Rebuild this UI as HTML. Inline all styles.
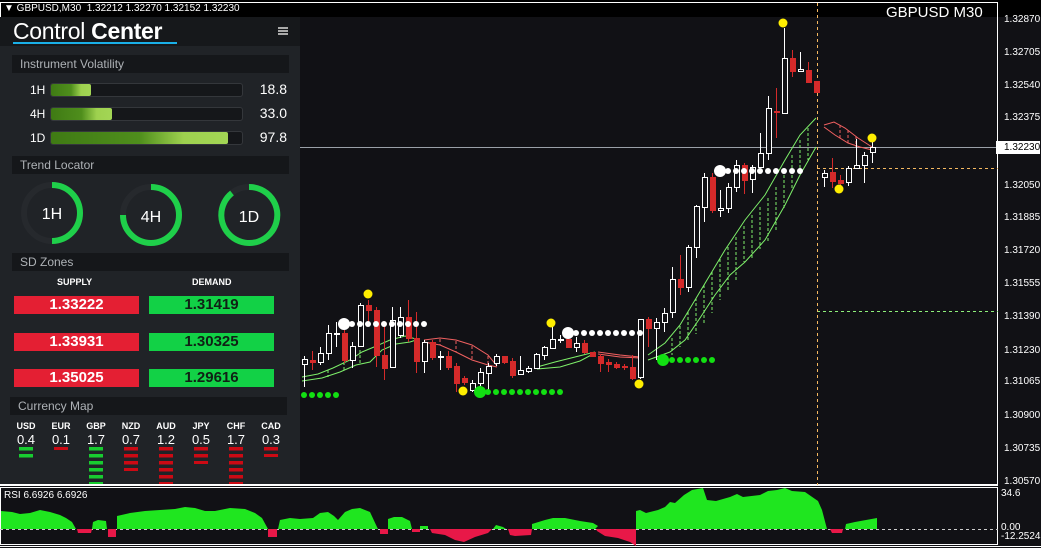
<!DOCTYPE html>
<html><head><meta charset="utf-8">
<style>
*{margin:0;padding:0;box-sizing:border-box}
body{width:1041px;height:548px;background:#111115;position:relative;overflow:hidden;font-family:"Liberation Sans",sans-serif;color:#fff}
.abs{position:absolute}
#panel{left:0;top:17px;width:300px;height:467px;background:#202327}
.hdr{position:absolute;left:12px;width:277px;height:18px;background:#15171a;color:#aeb2b6;font-size:12px;line-height:18px;padding-left:8px}
.bar{position:absolute;left:50px;width:193px;height:14px;background:#15171a;border:1px solid #34373b;border-radius:3px}
.fill{height:12px;border-radius:2px;background:linear-gradient(90deg,#3f7a14,#4f8e1c 50%,#9ed14f 75%,#a3d655)}
.lbl{position:absolute;font-size:12px}
.val{position:absolute;font-size:14px;right:13px;text-align:right}
.sd{position:absolute;width:125px;height:18px;font-size:15px;font-weight:bold;text-align:center;line-height:18px}
.red{background:#e41f33;color:#fff}.grn{background:#12d146;color:#102015}
.cm{position:absolute;text-align:center;width:30px}
.cm b{display:block;font-size:9px;font-weight:bold}
.cm i{display:block;font-style:normal;font-size:13px;margin-top:1px}
.ax{position:absolute;left:1004px;font-size:10px;color:#fff}
</style></head><body>
<div class="abs" style="left:0;top:0;width:1041px;height:17px;background:#000"></div>
<div class="abs" style="left:4px;top:3px;font-size:10px;">&#9660; GBPUSD,M30&nbsp; 1.32212 1.32270 1.32152 1.32230</div>
<div class="abs" style="left:886px;top:4px;font-size:15px;color:#fff">GBPUSD M30</div>

<svg class="abs" style="left:0;top:0" width="1041" height="548">
<rect x="0.5" y="2.5" width="997" height="482" fill="none" stroke="#fff"/>
<rect x="0.5" y="487.5" width="997" height="57" fill="none" stroke="#fff"/>
<line x1="0" y1="485.5" x2="998" y2="485.5" stroke="#fff"/>
<line x1="0" y1="546.5" x2="1041" y2="546.5" stroke="#fff"/>
<line x1="300" y1="147.5" x2="998" y2="147.5" stroke="#9aa0a8"/>
<line x1="817" y1="168.5" x2="998" y2="168.5" stroke="#f5b860" stroke-dasharray="3,3"/>
<line x1="817" y1="311.5" x2="998" y2="311.5" stroke="#8ef07a" stroke-dasharray="3,3"/>
<line x1="817.5" y1="3" x2="817.5" y2="485" stroke="#f5b860" stroke-dasharray="3,3"/>
<line x1="0" y1="529.5" x2="998" y2="529.5" stroke="#ccc" stroke-dasharray="3,3"/>
<g fill="none" stroke="#7ef06a" stroke-width="1">
<polyline points="302,377 318,374 333,368 350,360 362,352 374,347 390,340 405,336 416,339"/>
<polyline points="302,381 322,378 340,372 356,365 370,362 382,350 396,344 410,342 416,340"/>
<polyline points="537,367 555,362 575,357 595,352"/>
<polyline points="537,369 560,367 580,361 595,353"/>
<polyline points="648,355 665,343 680,325 695,300 710,275 725,250 745,220 765,195 785,160 800,135 816,118"/>
<polyline points="648,360 670,352 685,340 700,318 715,295 730,275 745,262 765,240 785,205 800,175 816,147"/>
</g>
<g stroke="#7ef06a" stroke-dasharray="3,2">
<line x1="672" y1="338" x2="672" y2="355"/><line x1="680" y1="326" x2="680" y2="347"/><line x1="688" y1="312" x2="688" y2="342"/><line x1="696" y1="298" x2="696" y2="334"/><line x1="704" y1="285" x2="704" y2="323"/><line x1="712" y1="272" x2="712" y2="313"/><line x1="720" y1="259" x2="720" y2="300"/><line x1="728" y1="247" x2="728" y2="290"/><line x1="736" y1="237" x2="736" y2="280"/><line x1="744" y1="226" x2="744" y2="262"/><line x1="752" y1="215" x2="752" y2="260"/><line x1="760" y1="207" x2="760" y2="249"/><line x1="768" y1="198" x2="768" y2="242"/><line x1="776" y1="187" x2="776" y2="230"/><line x1="784" y1="170" x2="784" y2="210"/><line x1="792" y1="155" x2="792" y2="190"/><line x1="800" y1="140" x2="800" y2="175"/><line x1="808" y1="128" x2="808" y2="160"/>
<line x1="328" y1="370" x2="328" y2="377"/><line x1="344" y1="362" x2="344" y2="370"/><line x1="360" y1="350" x2="360" y2="363"/><line x1="376" y1="345" x2="376" y2="357"/><line x1="392" y1="340" x2="392" y2="345"/>
</g>
<g fill="none" stroke="#f06060">
<polyline points="424,340 440,338 456,340 472,345 488,355 497,366"/>
<polyline points="424,342 440,345 456,352 472,360 488,365 497,367"/>
<polyline points="598,352 620,355 640,357"/>
<polyline points="598,354 620,357 640,358"/>
<polyline points="824,125 834,122 845,128 858,138 872,147"/>
<polyline points="824,127 835,135 848,143 860,147 872,150"/>
</g>
<g stroke="#f06060" stroke-dasharray="3,2"><line x1="440" y1="339" x2="440" y2="345"/><line x1="456" y1="341" x2="456" y2="352"/><line x1="472" y1="346" x2="472" y2="360"/><line x1="488" y1="356" x2="488" y2="365"/><line x1="840" y1="125" x2="840" y2="139"/><line x1="848" y1="130" x2="848" y2="143"/><line x1="856" y1="136" x2="856" y2="147"/></g>
<g stroke-width="1" shape-rendering="crispEdges">
<g stroke="#fff" fill="#111115">
<line x1="304.5" y1="356" x2="304.5" y2="387"/><rect x="302.5" y="359.5" width="5" height="5"/>
<line x1="320.5" y1="347" x2="320.5" y2="365"/><rect x="318.5" y="353.5" width="5" height="9"/>
<line x1="328.5" y1="325" x2="328.5" y2="360"/><rect x="326.5" y="333.5" width="5" height="20"/>
<line x1="336.5" y1="322" x2="336.5" y2="347"/><rect x="334.5" y="333.5" width="5" height="1"/>
<line x1="352.5" y1="342" x2="352.5" y2="368"/><rect x="350.5" y="346.5" width="5" height="14"/>
<line x1="360.5" y1="303" x2="360.5" y2="347"/><rect x="358.5" y="305.5" width="5" height="41"/>
<line x1="392.5" y1="307" x2="392.5" y2="367"/><rect x="390.5" y="320.5" width="5" height="47"/>
<line x1="400.5" y1="307" x2="400.5" y2="338"/><rect x="398.5" y="317.5" width="5" height="18"/>
<line x1="424.5" y1="340" x2="424.5" y2="373"/><rect x="422.5" y="342.5" width="5" height="19"/>
<line x1="440.5" y1="351" x2="440.5" y2="370"/><rect x="438.5" y="356.5" width="5" height="1"/>
<line x1="472.5" y1="380" x2="472.5" y2="392"/><rect x="470.5" y="383.5" width="5" height="7"/>
<line x1="480.5" y1="368" x2="480.5" y2="387"/><rect x="478.5" y="372.5" width="5" height="11"/>
<line x1="488.5" y1="363" x2="488.5" y2="390"/><rect x="486.5" y="366.5" width="5" height="7"/>
<line x1="496.5" y1="354" x2="496.5" y2="366"/><rect x="494.5" y="356.5" width="5" height="7"/>
<line x1="520.5" y1="356" x2="520.5" y2="375"/><rect x="518.5" y="370.5" width="5" height="4"/>
<line x1="528.5" y1="366" x2="528.5" y2="373"/><rect x="526.5" y="368.5" width="5" height="3"/>
<line x1="536.5" y1="353" x2="536.5" y2="369"/><rect x="534.5" y="354.5" width="5" height="14"/>
<line x1="544.5" y1="346" x2="544.5" y2="360"/><rect x="542.5" y="347.5" width="5" height="8"/>
<line x1="552.5" y1="327" x2="552.5" y2="348"/><rect x="550.5" y="339.5" width="5" height="9"/>
<line x1="560.5" y1="335" x2="560.5" y2="343"/><rect x="558.5" y="339.5" width="5" height="1"/>
<line x1="576.5" y1="337" x2="576.5" y2="352"/><rect x="574.5" y="343.5" width="5" height="4"/>
<line x1="640.5" y1="319" x2="640.5" y2="379"/><rect x="638.5" y="319.5" width="5" height="58"/>
<line x1="656.5" y1="318" x2="656.5" y2="360"/><rect x="654.5" y="322.5" width="5" height="6"/>
<line x1="664.5" y1="308" x2="664.5" y2="332"/><rect x="662.5" y="313.5" width="5" height="9"/>
<line x1="672.5" y1="267" x2="672.5" y2="318"/><rect x="670.5" y="279.5" width="5" height="33"/>
<line x1="688.5" y1="245" x2="688.5" y2="292"/><rect x="686.5" y="247.5" width="5" height="40"/>
<line x1="696.5" y1="205" x2="696.5" y2="258"/><rect x="694.5" y="206.5" width="5" height="41"/>
<line x1="704.5" y1="173" x2="704.5" y2="222"/><rect x="702.5" y="177.5" width="5" height="30"/>
<line x1="720.5" y1="190" x2="720.5" y2="217"/><rect x="718.5" y="208.5" width="5" height="2"/>
<line x1="728.5" y1="183" x2="728.5" y2="213"/><rect x="726.5" y="187.5" width="5" height="21"/>
<line x1="736.5" y1="160" x2="736.5" y2="192"/><rect x="734.5" y="165.5" width="5" height="22"/>
<line x1="752.5" y1="165" x2="752.5" y2="193"/><rect x="750.5" y="167.5" width="5" height="12"/>
<line x1="760.5" y1="133" x2="760.5" y2="167"/><rect x="758.5" y="153.5" width="5" height="14"/>
<line x1="768.5" y1="96" x2="768.5" y2="160"/><rect x="766.5" y="108.5" width="5" height="45"/>
<line x1="784.5" y1="28" x2="784.5" y2="113"/><rect x="782.5" y="58.5" width="5" height="55"/>
<line x1="800.5" y1="52" x2="800.5" y2="72"/><rect x="798.5" y="69.5" width="5" height="2"/>
<line x1="824.5" y1="170" x2="824.5" y2="187"/><rect x="822.5" y="173.5" width="5" height="4"/>
<line x1="848.5" y1="166" x2="848.5" y2="186"/><rect x="846.5" y="168.5" width="5" height="14"/>
<line x1="856.5" y1="139" x2="856.5" y2="168"/><rect x="854.5" y="165.5" width="5" height="3"/>
<line x1="864.5" y1="152" x2="864.5" y2="183"/><rect x="862.5" y="155.5" width="5" height="10"/>
<line x1="872.5" y1="140" x2="872.5" y2="163"/><rect x="870.5" y="147.5" width="5" height="5"/>
</g>
<g stroke="#d42a2a" fill="#d42a2a">
<line x1="312.5" y1="351" x2="312.5" y2="370"/><rect x="310.5" y="360.5" width="5" height="2"/>
<line x1="344.5" y1="330" x2="344.5" y2="363"/><rect x="342.5" y="333.5" width="5" height="27"/>
<line x1="368.5" y1="300" x2="368.5" y2="323"/><rect x="366.5" y="305.5" width="5" height="5"/>
<line x1="376.5" y1="307" x2="376.5" y2="367"/><rect x="374.5" y="310.5" width="5" height="45"/>
<line x1="384.5" y1="323" x2="384.5" y2="380"/><rect x="382.5" y="355.5" width="5" height="13"/>
<line x1="408.5" y1="300" x2="408.5" y2="342"/><rect x="406.5" y="317.5" width="5" height="21"/>
<line x1="416.5" y1="312" x2="416.5" y2="373"/><rect x="414.5" y="338.5" width="5" height="23"/>
<line x1="432.5" y1="340" x2="432.5" y2="360"/><rect x="430.5" y="342.5" width="5" height="15"/>
<line x1="448.5" y1="351" x2="448.5" y2="370"/><rect x="446.5" y="356.5" width="5" height="11"/>
<line x1="456.5" y1="363" x2="456.5" y2="392"/><rect x="454.5" y="366.5" width="5" height="17"/>
<line x1="464.5" y1="376" x2="464.5" y2="385"/><rect x="462.5" y="378.5" width="5" height="4"/>
<line x1="504.5" y1="356" x2="504.5" y2="364"/><rect x="502.5" y="356.5" width="5" height="6"/>
<line x1="512.5" y1="358" x2="512.5" y2="378"/><rect x="510.5" y="361.5" width="5" height="14"/>
<rect x="566.5" y="339.5" width="5" height="8"/>
<line x1="584.5" y1="340" x2="584.5" y2="354"/><rect x="582.5" y="343.5" width="5" height="9"/>
<rect x="590.5" y="352.5" width="5" height="4"/>
<line x1="600.5" y1="354" x2="600.5" y2="372"/><rect x="598.5" y="356.5" width="5" height="7"/>
<line x1="608.5" y1="359" x2="608.5" y2="372"/><rect x="606.5" y="362.5" width="5" height="2"/>
<line x1="616.5" y1="362" x2="616.5" y2="369"/><rect x="614.5" y="364.5" width="5" height="3"/>
<line x1="624.5" y1="364" x2="624.5" y2="370"/><rect x="622.5" y="366.5" width="5" height="1"/>
<line x1="632.5" y1="355" x2="632.5" y2="380"/><rect x="630.5" y="367.5" width="5" height="11"/>
<line x1="648.5" y1="317" x2="648.5" y2="347"/><rect x="646.5" y="319.5" width="5" height="9"/>
<line x1="680.5" y1="255" x2="680.5" y2="295"/><rect x="678.5" y="279.5" width="5" height="8"/>
<line x1="712.5" y1="173" x2="712.5" y2="213"/><rect x="710.5" y="177.5" width="5" height="33"/>
<line x1="744.5" y1="163" x2="744.5" y2="194"/><rect x="742.5" y="165.5" width="5" height="15"/>
<line x1="776.5" y1="88" x2="776.5" y2="138"/><rect x="774.5" y="111.5" width="5" height="1"/>
<line x1="792.5" y1="50" x2="792.5" y2="77"/><rect x="790.5" y="58.5" width="5" height="13"/>
<line x1="808.5" y1="62" x2="808.5" y2="82"/><rect x="806.5" y="70.5" width="5" height="12"/>
<rect x="814.5" y="81.5" width="5" height="11"/>
<line x1="832.5" y1="158" x2="832.5" y2="188"/><rect x="830.5" y="172.5" width="5" height="9"/>
<line x1="840.5" y1="175" x2="840.5" y2="187"/><rect x="838.5" y="180.5" width="5" height="3"/>
</g></g>
<g fill="#fff">
<circle cx="344" cy="324" r="6"/><circle cx="352" cy="324" r="3"/><circle cx="360" cy="324" r="3"/><circle cx="368" cy="324" r="3"/><circle cx="376" cy="324" r="3"/><circle cx="384" cy="324" r="3"/><circle cx="392" cy="324" r="3"/><circle cx="400" cy="324" r="3"/><circle cx="408" cy="324" r="3"/><circle cx="416" cy="324" r="3"/><circle cx="424" cy="324" r="3"/>
<circle cx="568" cy="333" r="6"/><circle cx="576" cy="333" r="3"/><circle cx="584" cy="333" r="3"/><circle cx="592" cy="333" r="3"/><circle cx="600" cy="333" r="3"/><circle cx="608" cy="333" r="3"/><circle cx="616" cy="333" r="3"/><circle cx="624" cy="333" r="3"/><circle cx="632" cy="333" r="3"/><circle cx="640" cy="333" r="3"/>
<circle cx="720" cy="171" r="6"/><circle cx="728" cy="171" r="3"/><circle cx="736" cy="171" r="3"/><circle cx="744" cy="171" r="3"/><circle cx="752" cy="171" r="3"/><circle cx="760" cy="171" r="3"/><circle cx="768" cy="171" r="3"/><circle cx="776" cy="171" r="3"/><circle cx="784" cy="171" r="3"/><circle cx="792" cy="171" r="3"/><circle cx="800" cy="171" r="3"/>
</g>
<g fill="#12e012">
<circle cx="304" cy="395" r="3"/><circle cx="312" cy="395" r="3"/><circle cx="320" cy="395" r="3"/><circle cx="328" cy="395" r="3"/><circle cx="336" cy="395" r="3"/>
<circle cx="480" cy="392" r="6"/><circle cx="488" cy="392" r="3"/><circle cx="496" cy="392" r="3"/><circle cx="504" cy="392" r="3"/><circle cx="512" cy="392" r="3"/><circle cx="520" cy="392" r="3"/><circle cx="528" cy="392" r="3"/><circle cx="536" cy="392" r="3"/><circle cx="544" cy="392" r="3"/><circle cx="552" cy="392" r="3"/><circle cx="560" cy="392" r="3"/>
<circle cx="663" cy="360" r="6"/><circle cx="672" cy="360" r="3"/><circle cx="680" cy="360" r="3"/><circle cx="688" cy="360" r="3"/><circle cx="696" cy="360" r="3"/><circle cx="704" cy="360" r="3"/><circle cx="712" cy="360" r="3"/>
</g>
<g fill="#ffee00">
<circle cx="783" cy="23" r="4.5"/><circle cx="368" cy="294" r="4.5"/><circle cx="463" cy="391" r="4.5"/><circle cx="551" cy="323" r="4.5"/><circle cx="639" cy="384" r="4.5"/><circle cx="839" cy="189" r="4.5"/><circle cx="872" cy="138" r="4.5"/>
</g>
<g fill="#1fe61f">
<polygon points="1,529 1,511 12,512 20,514 30,513 40,510 50,512 60,515 66,518 72,522 76,529"/>
<polygon points="92,529 93,522 98,520 106,521 107,529"/>
<polygon points="117,529 117,516 130,513 145,511 160,510 175,509 185,507 195,508 205,511 215,511 230,508 245,509 255,513 262,518 268,529"/>
<polygon points="278,529 280,520 290,518 300,519 300,529"/>
<polygon points="300,529 300,519 313,518 320,513 328,512 334,516 338,520 345,512 352,509 360,508 370,512 377,527 378,529"/>
<polygon points="388,529 388,519 394,517 402,517 410,521 412,529"/>
<polygon points="420,529 420,526 428,526 428,529"/>
<polygon points="493,529 496,525 503,527 506,529"/>
<polygon points="532,529 532,524 545,520 553,518 565,518 580,521 593,523 598,526 595,529"/>
<polygon points="636,529 636,511 640,510 646,513 658,510 665,507 670,502 675,503 684,495 692,490 703,488 707,500 716,501 730,497 737,494 743,497 760,495 768,491 777,490 785,488 792,491 805,492 818,501 822,510 827,529"/>
<polygon points="845,529 846,524 855,522 866,520 877,518 877,529"/>
</g>
<g fill="#e81848">
<polygon points="77,529 92,529 91,533 78,533"/>
<polygon points="108,529 116,529 116,537 108,537"/>
<polygon points="268,529 277,529 277,537 268,537"/>
<polygon points="380,529 388,529 388,534 380,534"/>
<polygon points="412,529 420,529 420,532 412,532"/>
<polygon points="430,529 492,529 488,533 475,537 464,542 455,540 445,535 432,533"/>
<polygon points="508,529 532,529 531,535 515,536 510,535"/>
<polygon points="596,529 636,529 636,546 630,542 618,538 605,536 597,531"/>
<polygon points="830,529 843,529 842,533 832,533"/>
</g>
<rect x="996" y="141" width="44" height="13" fill="#fff"/>
</svg>

<div class="ax" style="top:14px">1.32870</div>
<div class="ax" style="top:47px">1.32705</div>
<div class="ax" style="top:80px">1.32540</div>
<div class="ax" style="top:112px">1.32375</div>
<div class="ax" style="top:142px;color:#000">1.32230</div>
<div class="ax" style="top:180px">1.32050</div>
<div class="ax" style="top:212px">1.31885</div>
<div class="ax" style="top:245px">1.31720</div>
<div class="ax" style="top:278px">1.31555</div>
<div class="ax" style="top:311px">1.31390</div>
<div class="ax" style="top:345px">1.31230</div>
<div class="ax" style="top:376px">1.31065</div>
<div class="ax" style="top:410px">1.30900</div>
<div class="ax" style="top:443px">1.30735</div>
<div class="ax" style="top:476px">1.30570</div>
<div class="ax" style="top:488px;left:1001px">34.6</div>
<div class="ax" style="top:522px;left:1001px">0.00</div>
<div class="ax" style="top:531px;left:1001px">-12.2524</div>
<div class="abs" style="left:4px;top:490px;font-size:10px">RSI 6.6926 6.6926</div>

<div id="panel" class="abs">
 <div class="abs" style="left:0;top:0;width:300px;height:29px;background:#16181b"></div>
 <div class="abs" style="left:13px;top:1px;font-size:23px;letter-spacing:-0.3px">Control <b>Center</b></div>
 <div class="abs" style="left:13px;top:25px;width:164px;height:2px;background:#1ab0e8"></div>
 <div class="abs" style="left:278px;top:10px;width:10px;height:2px;background:#aaa;box-shadow:0 3px 0 #aaa,0 6px 0 #aaa"></div>
 <div class="hdr" style="top:38px">Instrument Volatility</div>
 <div class="lbl" style="left:30px;top:66px">1H</div><div class="bar" style="top:66px"><div class="fill" style="width:40px"></div></div><div class="val" style="top:64px">18.8</div>
 <div class="lbl" style="left:30px;top:90px">4H</div><div class="bar" style="top:90px"><div class="fill" style="width:61px"></div></div><div class="val" style="top:88px">33.0</div>
 <div class="lbl" style="left:30px;top:114px">1D</div><div class="bar" style="top:114px"><div class="fill" style="width:177px"></div></div><div class="val" style="top:112px">97.8</div>
 <div class="hdr" style="top:139px">Trend Locator</div>
 <svg class="abs" style="left:0;top:160px" width="300" height="85">
  <g fill="none" stroke-width="6">
   <circle cx="52" cy="36" r="28" stroke="#26292d"/>
   <path d="M52 8 A28 28 0 0 1 52 64" stroke="#1fcf4a"/>
   <circle cx="151" cy="38" r="28" stroke="#26292d"/>
   <path d="M151 10 A28 28 0 1 1 123 38" stroke="#1fcf4a"/>
   <circle cx="249" cy="38" r="28" stroke="#26292d"/>
   <path d="M249 10 A28 28 0 1 1 232 16" stroke="#1fcf4a"/>
  </g>
  <g fill="#fff" font-family="Liberation Sans" font-size="16" text-anchor="middle">
   <text x="52" y="42">1H</text><text x="151" y="45">4H</text><text x="249" y="45">1D</text>
  </g>
 </svg>
 <div class="hdr" style="top:236px">SD Zones</div>
 <div class="lbl" style="left:57px;top:260px;font-size:9px;font-weight:bold">SUPPLY</div>
 <div class="lbl" style="left:192px;top:260px;font-size:9px;font-weight:bold">DEMAND</div>
 <div class="sd red" style="left:14px;top:279px">1.33222</div><div class="sd grn" style="left:149px;top:279px">1.31419</div>
 <div class="sd red" style="left:14px;top:316px">1.33931</div><div class="sd grn" style="left:149px;top:316px">1.30325</div>
 <div class="sd red" style="left:14px;top:352px">1.35025</div><div class="sd grn" style="left:149px;top:352px">1.29616</div>
 <div class="hdr" style="top:380px;left:10px">Currency Map</div>
 <div class="cm" style="left:11px;top:404px"><b>USD</b><i>0.4</i></div>
 <div class="cm" style="left:46px;top:404px"><b>EUR</b><i>0.1</i></div>
 <div class="cm" style="left:81px;top:404px"><b>GBP</b><i>1.7</i></div>
 <div class="cm" style="left:116px;top:404px"><b>NZD</b><i>0.7</i></div>
 <div class="cm" style="left:151px;top:404px"><b>AUD</b><i>1.2</i></div>
 <div class="cm" style="left:186px;top:404px"><b>JPY</b><i>0.5</i></div>
 <div class="cm" style="left:221px;top:404px"><b>CHF</b><i>1.7</i></div>
 <div class="cm" style="left:256px;top:404px"><b>CAD</b><i>0.3</i></div>
 <svg class="abs" style="left:0;top:430px" width="300" height="37">
  <g fill="#18cc30"><rect x="19" y="0" width="14" height="3.5"/><rect x="19" y="7" width="14" height="3.5"/>
  <rect x="89" y="0" width="14" height="3.5"/><rect x="89" y="7" width="14" height="3.5"/><rect x="89" y="14" width="14" height="3.5"/><rect x="89" y="21" width="14" height="3.5"/><rect x="89" y="28" width="14" height="3.5"/><rect x="89" y="35" width="14" height="3.5"/></g>
  <g fill="#cc0a14"><rect x="54" y="0" width="14" height="3"/>
  <rect x="124" y="0" width="14" height="3.5"/><rect x="124" y="7" width="14" height="3.5"/><rect x="124" y="14" width="14" height="3.5"/><rect x="124" y="21" width="14" height="3"/>
  <rect x="159" y="0" width="14" height="3.5"/><rect x="159" y="7" width="14" height="3.5"/><rect x="159" y="14" width="14" height="3.5"/><rect x="159" y="21" width="14" height="3.5"/><rect x="159" y="28" width="14" height="3.5"/><rect x="159" y="35" width="14" height="3.5"/>
  <rect x="194" y="0" width="14" height="3.5"/><rect x="194" y="7" width="14" height="3.5"/><rect x="194" y="14" width="14" height="3"/>
  <rect x="229" y="0" width="14" height="3.5"/><rect x="229" y="7" width="14" height="3.5"/><rect x="229" y="14" width="14" height="3.5"/><rect x="229" y="21" width="14" height="3.5"/><rect x="229" y="28" width="14" height="3.5"/><rect x="229" y="35" width="14" height="3.5"/>
  <rect x="264" y="0" width="14" height="3.5"/><rect x="264" y="7" width="14" height="3"/></g>
 </svg>
</div>
</body></html>
